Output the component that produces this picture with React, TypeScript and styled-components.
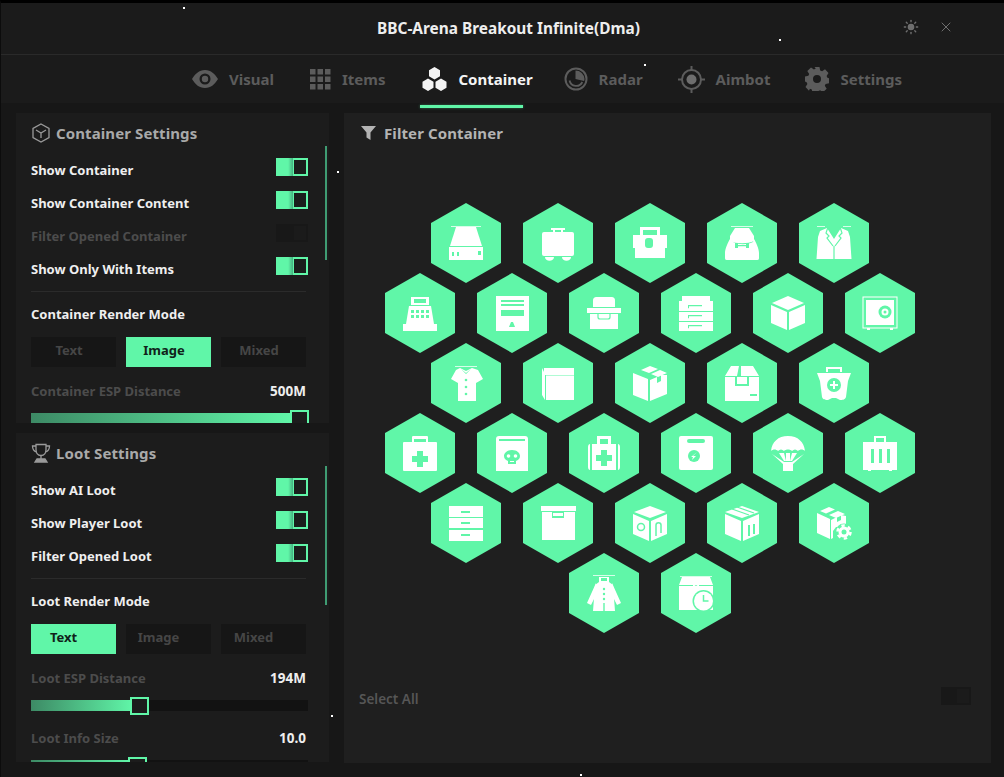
import React from 'react';
import styled, { createGlobalStyle } from 'styled-components';
import { Sun, X } from 'lucide-react';

const GREEN = '#60f6a8';

const GlobalStyle = createGlobalStyle`
  html, body { margin: 0; padding: 0; background: #000; }
  body { font-family: "Noto Sans", "Open Sans", sans-serif; }
  * { box-sizing: border-box; }
`;

const Window = styled.div`
  position: relative; width: 1004px; height: 777px; overflow: hidden;
  background: #171717; border-top: 3px solid #000; border-left: 1px solid #0c0c0c;
`;
const Header = styled.header`
  height: 52px; position: relative; display: flex; align-items: center; justify-content: center;
  background: #1b1b1b; border-bottom: 1px solid #2a2a2a; padding-left: 12px;
`;
const Title = styled.h1`
  margin: 0; font-size: 15.4px; font-weight: 700; color: #eee;
`;
const WindowButtons = styled.div`
  position: absolute; right: 50px; top: 16px; display: flex; gap: 19px; color: #6f6f6f;
`;
const Nav = styled.nav`
  height: 48px; display: flex; padding-left: 191px; background: #1b1b1b;
`;
const Tab = styled.div<{ $active?: boolean; $gap: number }>`
  position: relative; display: flex; align-items: center; gap: 11px; height: 48px;
  margin-right: ${p => p.$gap}px; font-size: 15px; font-weight: 700;
  color: ${p => (p.$active ? '#f4f4f4' : '#5c5c5c')};
  ${p => p.$active && `
    &::after {
      content: ''; position: absolute; left: -2px; right: 10px; bottom: -5px; height: 3px;
      background: ${GREEN}; box-shadow: 0 0 3px rgba(96,246,168,.4);
    }
  `}
`;
const Body = styled.main`
  display: flex; gap: 15px; padding: 10px 13px 0 15px; background: #171717; height: 674px;
`;
const Sidebar = styled.div`
  width: 313px; display: flex; flex-direction: column; gap: 10px;
`;
const Panel = styled.section<{ $height: number }>`
  position: relative; height: ${p => p.$height}px; overflow: hidden; background: #1c1c1c;
  padding: 9px 21px 0 15px;
`;
const PanelHead = styled.div`
  display: flex; align-items: center; gap: 5px; height: 22px; margin-bottom: 9px;
  font-size: 15px; font-weight: 700; color: #a9a9a9; letter-spacing: 0.1px;
`;
const Scroll = styled.div<{ $height: number }>`
  position: absolute; right: 2px; top: 33px; width: 2px; height: ${p => p.$height}px; background: #3f9c73;
`;
const Row = styled.div`
  height: 33px; display: flex; align-items: center; justify-content: space-between;
`;
const Label = styled.span<{ $dim?: boolean }>`
  font-size: 13px; font-weight: 700;
  color: ${p => (p.$dim ? '#4c4c4c' : '#efefef')};
`;
const Toggle = styled.span<{ $on?: boolean }>`
  display: flex; justify-content: flex-end; width: 32px; height: 18px; padding: 2px;
  margin-top: -5px;
  background: ${p => (p.$on ? `linear-gradient(90deg, ${GREEN} 38%, #48b684 52%, ${GREEN} 54%)` : '#181818')};
  &::after {
    content: ''; width: 12px; height: 14px;
    background: ${p => (p.$on ? '#1a1f1c' : '#1b1b1b')};
  }
`;
const Divider = styled.div`
  height: 1px; background: #2b2b2b; margin: 6px 2px 0 0;
`;
const SubTitle = styled.div`
  height: 43px; margin-bottom: 2px; display: flex; align-items: center; font-size: 13px; font-weight: 700;
  color: #efefef;
`;
const Modes = styled.div`
  display: grid; grid-template-columns: repeat(3, 85px); gap: 10px; margin-bottom: 13px;
`;
const ModeButton = styled.div<{ $active?: boolean; $inset: number }>`
  height: 30px; display: flex; align-items: center; justify-content: center;
  padding: 0 ${p => p.$inset}px 5px 0; font-size: 13px; font-weight: 700;
  background: ${p => (p.$active ? GREEN : '#161616')};
  color: ${p => (p.$active ? '#10221a' : '#464646')};
`;
const ValueRow = styled.div<{ $top?: number }>`
  height: 22px; margin-top: ${p => p.$top ?? 0}px;
  display: flex; align-items: center; justify-content: space-between; padding-right: 2px;
`;
const Value = styled.span`
  font-size: 13.5px; font-weight: 700; color: #eee;
`;
const Track = styled.div`
  position: relative; width: 277px; height: 11px; margin: 11px 0 0; background: #121212;
`;
const Fill = styled.div`
  height: 100%; background: linear-gradient(90deg, #3d8a65, ${GREEN});
`;
const Knob = styled.div`
  position: absolute; top: -3px; width: 19px; height: 18px; margin-left: -3px;
  border: 2px solid ${GREEN}; background: #1c1c1c;
`;
const MainPanel = styled.section`
  position: relative; flex: 1; height: 650px; background: #1f1f1f; padding: 9px 17px 0 17px;
`;
const FilterHead = styled(PanelHead)`
  margin: 0; color: #b3b3b3; gap: 8px;
`;
const HexGrid = styled.div`
  width: 530px; margin: 59px 0 0 24px; display: flex; flex-direction: column;
`;
const HexRow = styled.div`
  display: flex; justify-content: center; gap: 22px; margin-bottom: -10px;
`;
const Hex = styled.div`
  width: 70px; height: 80px; display: flex; align-items: center; justify-content: center;
  background: ${GREEN}; clip-path: polygon(50% 0, 100% 25%, 100% 75%, 50% 100%, 0 75%, 0 25%);
`;
const Footer = styled.div`
  position: absolute; left: 15px; right: 20px; top: 574px; height: 18px;
  display: flex; align-items: center; justify-content: space-between;
`;
const SelectAll = styled.span`
  padding-top: 6px; font-size: 13.5px; font-weight: 600; color: #565656;
`;
const OffSwitch = styled(Toggle)`
  margin: 0; width: 30px;
`;
const Speck = styled.i<{ $x: number; $y: number }>`
  position: absolute; left: ${p => p.$x}px; top: ${p => p.$y}px; width: 2px; height: 2px; background: #fff;
`;

const Glyph = ({ children }: { children: React.ReactNode }) => (
  <svg width="36" height="36" viewBox="0 0 36 36" fill="#fff">{children}</svg>
);
const cut = { fill: GREEN };
const cutLine = { fill: 'none', stroke: GREEN, strokeWidth: 1.2 };

const icons: React.ReactNode[][] = [
  [
    <><path d="M3 1h30v.8H3z" /><path d="M8 2h20l6 19H2z" /><path d="M1 22h34v13H1z" /><path d="M4 27h2v4H4zM9 27h2v4H9zM30 26h3v4h-3z" {...cut} /></>,
    <><path d="M11 3h14v2h-2v3h-2V5h-6v3h-2V5h-2z" /><rect x="2" y="7" width="32" height="24" rx="2" /><path d="M5 32h9c0 5-9 5-9 0zM22 32h9c0 5-9 5-9 0z" /></>,
    <><path d="M8 2h20v8h-3V5H11v5H8z" /><path d="M1 10h34v13h-2v10H3V23H1z" /><rect x="13" y="13" width="8" height="10" rx="3" {...cut} /></>,
    <><path d="M7 1h22v.8H7z" /><path d="M11 3h14l5 8v5c-6 3-18 3-24 0v-5z" /><path d="M6 14c-2 3-5 10-5 14v5c0 2 1 2 3 2h28c2 0 3 0 3-2v-5c0-4-3-11-5-14l-1 3c-6 3-14 3-20 0z" /><path d="M11 18h3v5h-3zM22 18h3v5h-3zM14 20h8v1.2h-8z" {...cut} /></>,
    <><path d="M1 1h8v.8H1zM27 1h8v.8h-8z" /><path d="M11 3L4 6l-2 6L.5 34h35L34 12l-2-6-7-3-7 11z" /><path d="M12 2l-2 6 3 3-2 2 6 8M24 2l2 6-3 3 2 2-6 8M18 21v13" {...cutLine} /></>,
  ],
  [
    <><path d="M9 2h18v8H9z" /><path d="M12 4h12v4H12z" {...cut} /><path d="M7 11h22l3 18H4z" /><path d="M9 15h3v3H9zM14 15h3v3h-3zM19 15h3v3h-3zM24 15h3v3h-3zM9 20h3v3H9zM14 20h3v3h-3zM19 20h3v3h-3zM24 20h3v3h-3z" {...cut} /><path d="M1 29h34v7H1z" /></>,
    <><path d="M2 1h33v35H2z" /><path d="M7 5h23v2H7zM7 9h23v2H7zM7 15h23v6H7z" {...cut} /><path d="M17 27l2 0 2 5h-6z" {...cut} /></>,
    <><path d="M7 6c0-3 1-4 4-4h14c3 0 4 1 4 4v6H7z" /><path d="M1 13h34v5H1z" /><path d="M4 19h28v15H4z" /><path d="M12 19v3c0 1 1 2 2 2h8c1 0 2-1 2-2v-3" {...cutLine} /></>,
    <><path d="M4 1h28v6H4z" /><path d="M1 6h34v10H1zM1 17h34v9H1zM1 27h34v9H1z" /><path d="M10 10h14v1.2H11v2h-1zM10 20h14v1.2H11v2h-1zM10 30h14v1.2H11v2h-1z" {...cut} /></>,
    <><path d="M18 1l16 7-16 7L2 8z" /><path d="M1 10l16 7v18L1 28zM35 10l-16 7v18l16-7z" /></>,
    <><rect x="1" y="2" width="34" height="31" fill="none" stroke="#fff" /><rect x="4" y="5" width="28" height="25" /><circle cx="23" cy="17" r="6.500" {...cut} /><circle cx="23" cy="17" r="3.500" /><circle cx="23" cy="17" r="1.500" {...cut} /><path d="M5 33h3v2H5zM28 33h3v2h-3z" /></>,
  ],
  [
    <><path d="M7 1h22v.8H7z" /><path d="M12 3l6 3 6-3 6 2 5 9-7 4v18H10V18l-7-4 5-9z" /><path d="M13 4l5 5 5-5-5 4z" {...cut} /><circle cx="18" cy="15" r="1.300" {...cut} /><circle cx="18" cy="22" r="1.300" {...cut} /><circle cx="18" cy="29" r="1.300" {...cut} /></>,
    <><path d="M4 3h30v7H4z" /><path d="M2 3l3 6v26l-3-5z" /><path d="M6 10.500h28V35H6z" /></>,
    <><path d="M18 1l8 3-9 4-8-3zM28 5l7 3-9 4-7-3z" /><path d="M1 8l15 6v22L1 30zM35 10v19l-17 7V15l7-3v6l4-2v-6z" /></>,
    <><path d="M7 1h8l-2 10H1zM17 1h12l6 10H17z" /><path d="M1 12h10v9h14v-9h10v24H1z" /><path d="M13 12h10v7H13z" /><path d="M26 29h7v2h-7z" {...cut} /></>,
    <><path d="M10 7V2h16v5h-2V4H12v3z" /><path d="M1 8h34l-3 8-2 16c-1 3-4 3-6 3l-4-2h-4l-4 2c-2 0-5 0-6-3L4 16z" /><circle cx="18" cy="20" r="7" {...cut} /><path d="M17 16h2v3h3v2h-3v3h-2v-3h-3v-2h3z" /></>,
  ],
  [
    <><path d="M10 7V2c0-1 1-1 1-1h14s1 0 1 1v5h-2V4H12v3z" /><rect x="1" y="7" width="34" height="29" rx="1" /><path d="M15 16h6v5h5v6h-5v5h-6v-5h-5v-6h5z" {...cut} /></>,
    <><path d="M2 4c0-2 1-3 3-3h26c2 0 3 1 3 3v32H2z" /><path d="M5 4h26v2H5z" {...cut} /><path d="M18 15c5 0 8 3 8 6 0 3-2 4-4 5v3h-8v-3c-2-1-4-2-4-5 0-3 3-6 8-6z" {...cut} /><circle cx="14.500" cy="21" r="1.800" /><circle cx="21.500" cy="21" r="1.800" /><path d="M16 26h4v1h-4z" /></>,
    <><path d="M11 9V1h14v8h-3V4H14v5z" /><path d="M2 12c0-2 1-3 2-3v26c-1 0-2-1-2-3zM6 9h24v26H6zM32 9c1 0 2 1 2 3v20c0 2-1 3-2 3z" /><path d="M15 15h6v5h5v6h-5v5h-6v-5h-5v-6h5z" {...cut} /></>,
    <><rect x="1" y="1" width="34" height="34" rx="2" /><rect x="9" y="4" width="18" height="4" rx="2" {...cut} /><circle cx="16" cy="21" r="6" {...cut} /><path d="M19 17l-4 4h3l-4 4 1-3h-2z" /></>,
    <><path d="M18 1C8 1 2 7 1 16c2-2 5-2 7 0 2-2 4-2 6 0 2-2 6-2 8 0 2-2 4-2 6 0 2-2 5-2 7 0C34 7 28 1 18 1z" /><path d="M2 19l11 10h10l11-10-12 8h-8z" /><path d="M9 18l5 8h2l-2-8zM27 18l-5 8h-2l2-8zM16 18h4v8h-4z" /><path d="M13 28h10v8H13z" /></>,
    <><path d="M12 7V1h12v6h-2V3H14v4z" /><path d="M1 7h34v28H1z" /><path d="M6 35h3v1H6zM27 35h3v1h-3z" /><path d="M9 14h3v14H9zM17 14h3v14h-3zM25 14h3v14h-3z" {...cut} /></>,
  ],
  [
    <><path d="M1 1h34v11H1zM1 13h34v10H1zM1 25h34v11H1z" /><path d="M13 6h9v2h-9zM13 17h9v2h-9zM13 29h9v2h-9z" {...cut} /></>,
    <><path d="M1 1h35v5H1z" /><path d="M2 7h33v28H2z" /><path d="M12 7h12v6H12z" {...cut} /><path d="M13 8h10v3H13z" /></>,
    <><path d="M18 1l16 6-16 6L2 7z" /><path d="M1 9l16 7v20L1 29zM35 9v20l-16 7V16z" /><circle cx="9" cy="22" r="3.500" fill="none" stroke={GREEN} strokeWidth="1.500" /><path d="M24 31V20c0-3 5-3 5 0v8" fill="none" stroke={GREEN} strokeWidth="1.500" /></>,
    <><path d="M18 1l17 6-17 6L1 7z" /><path d="M8 4l17 6M13 2l17 6" fill="none" stroke={GREEN} strokeWidth="1.200" /><path d="M1 9l16 7v20L1 29zM35 9v20l-16 7V16z" /><path d="M24 20h2v11h-2zM29 19h2v10h-2z" {...cut} /></>,
    <><path d="M13 2l6 2.500-9 4-6-2.500zM22 6l7 3-9 4-7-3z" /><path d="M1 8l13 6v20L1 28zM30 11v11H20l-3 4v7l-2 1V15l6-3v5l4-2v-5z" /><circle cx="28" cy="27" r="8.500" {...cut} /><circle cx="28" cy="27" r="5.500" /><circle cx="28" cy="27" r="6.500" fill="none" stroke="#fff" strokeWidth="2.500" strokeDasharray="3.400 3.400" /><circle cx="28" cy="27" r="2.500" {...cut} /></>,
  ],
  [
    <><path d="M7 0h22v.8H7z" /><path d="M13 2h10v5l4 3 2 26H7l2-26 4-3z" /><path d="M15 3h6v3h-6z" {...cut} /><path d="M10 8L1 28l4 2 6-12zM26 8l9 20-4 2-6-12z" /><path d="M17.300 28h1.400v8h-1.400z" {...cut} /><circle cx="18" cy="14" r="1.200" {...cut} /><circle cx="18" cy="19" r="1.200" {...cut} /><circle cx="18" cy="24" r="1.200" {...cut} /></>,
    <><path d="M2 1h32v.8H2z" /><path d="M4 2h11v8h6V2h11l3 8H1z" /><path d="M1 11h34v24H1z" /><path d="M15 2h6v10l-3-2-3 2z" /><circle cx="25.500" cy="26" r="11" {...cut} /><circle cx="25.500" cy="26" r="9.500" /><path d="M25.500 20v6h5" fill="none" stroke={GREEN} strokeWidth="1.500" /></>,
  ],
];

const EyeIcon = () => (
  <svg width="26" height="18" viewBox="0 0 26 18" fill="currentColor">
    <path fillRule="evenodd" d="M13 0c6 0 10 4 13 9-3 5-7 9-13 9S3 14 0 9c3-5 7-9 13-9zm0 3.500a5.500 5.500 0 1 0 0 11 5.500 5.500 0 0 0 0-11z" />
    <circle cx="13" cy="9" r="3.200" />
  </svg>
);
const GridIcon = () => (
  <svg width="21" height="21" viewBox="0 0 21 21" fill="currentColor">
    {[0, 7.5, 15].flatMap(x => [0, 7.5, 15].map(y => <rect key={`${x}-${y}`} x={x} y={y} width="5.500" height="5.500" />))}
  </svg>
);
const HexesIcon = () => (
  <svg width="25" height="24" viewBox="0 0 25 24" fill="currentColor">
    <path d="M12.500 0l5.500 3.200v6.100l-5.500 3.200L7 9.300V3.200zM6 11.500l5.500 3.200v6.100L6 24 .5 20.800v-6.100zM19 11.500l5.500 3.200v6.100L19 24l-5.500-3.200v-6.100z" />
  </svg>
);
const RadarIcon = () => (
  <svg width="24" height="24" viewBox="0 0 24 24" fill="none" stroke="currentColor">
    <circle cx="12" cy="12" r="10.500" strokeWidth="2" />
    <path d="M5.500 13.500a6.800 6.800 0 0 0 12.800 1.500" strokeWidth="1.800" />
    <path d="M11.500 3.500a9 9 0 0 1 9 8.500c0 1-.2 1.500-.5 2L11.500 12z" fill="currentColor" stroke="none" />
  </svg>
);
const AimIcon = () => (
  <svg width="27" height="27" viewBox="0 0 27 27" fill="none" stroke="currentColor" strokeWidth="2">
    <circle cx="13.500" cy="13.500" r="9.500" />
    <circle cx="13.500" cy="13.500" r="5" fill="#6e6e6e" stroke="none" />
    <path d="M13.500 0v5M13.500 22v5M0 13.500h5M22 13.500h5" />
  </svg>
);
const GearIcon = () => (
  <svg width="24" height="24" viewBox="0 0 24 24" fill="currentColor">
    <path fillRule="evenodd" d="M9.500 0h5l.7 3.400 1.900.8L20 2.300 23.500 6l-1.900 2.900.8 1.900 1.600.4v5l-3.400.7-.8 1.900 1.900 2.900-3.700 3.500-2.900-1.900-1.900.8-.7 1.800h-5l-.7-3.400-1.900-.8L4 23.700.5 20l1.900-2.900-.8-1.900L0 14.500v-5l3.400-.7.8-1.900L2.300 4 6 .5l2.900 1.900 1.900-.8zM12 8a4 4 0 1 0 0 8 4 4 0 0 0 0-8z" />
  </svg>
);
const BoxIcon = () => (
  <svg width="20" height="20" viewBox="0 0 20 20" fill="none" stroke="#9a9a9a" strokeWidth="1.300">
    <path d="M10 1l8 4.500v9L10 19l-8-4.500v-9z" />
    <path d="M5 7l5 3 5-3M10 10v5" />
  </svg>
);
const TrophyIcon = () => (
  <svg width="20" height="20" viewBox="0 0 20 20" fill="none" stroke="#9a9a9a" strokeWidth="1.300">
    <path d="M5 1.500h10v5c0 4-2 6-5 6s-5-2-5-6z" />
    <path d="M5 3H1.500c0 3 1 5 4 6M15 3h3.500c0 3-1 5-4 6M10 13v3" />
    <path d="M4 19l2-3h8l2 3z" fill="#9a9a9a" />
  </svg>
);
const FunnelIcon = () => (
  <svg width="15" height="14" viewBox="0 0 15 14" fill="#b3b3b3"><path d="M0 0h15L9.500 6.500V14l-4-2.500v-5z" /></svg>
);

const tabs = [
  { name: 'Visual', icon: <EyeIcon />, gap: 36 },
  { name: 'Items', icon: <GridIcon />, gap: 37 },
  { name: 'Container', icon: <HexesIcon />, gap: 31, active: true },
  { name: 'Radar', icon: <RadarIcon />, gap: 35 },
  { name: 'Aimbot', icon: <AimIcon />, gap: 35 },
  { name: 'Settings', icon: <GearIcon />, gap: 0 },
];
const specks = [[182, 4], [778, 36], [336, 168], [643, 61], [579, 771], [330, 712]];

const ModeGroup = ({ active, inset }: { active: string; inset: number }) => (
  <Modes>
    {['Text', 'Image', 'Mixed'].map(m => (
      <ModeButton key={m} $active={m === active} $inset={inset}>{m}</ModeButton>
    ))}
  </Modes>
);

const Slider = ({ pct }: { pct: number }) => (
  <Track>
    <Fill style={{ width: `${pct}%` }} />
    <Knob style={{ left: `${pct}%` }} />
  </Track>
);

const ToggleRow = ({ label, on = true }: { label: string; on?: boolean }) => (
  <Row>
    <Label $dim={!on}>{label}</Label>
    <Toggle $on={on} />
  </Row>
);

export default function App() {
  return (
    <Window>
      <GlobalStyle />
      <Header>
        <Title>BBC-Arena Breakout Infinite(Dma)</Title>
        <WindowButtons>
          <Sun size={16} fill="currentColor" />
          <X size={16} strokeWidth={1.5} />
        </WindowButtons>
      </Header>
      <Nav>
        {tabs.map(t => (
          <Tab key={t.name} $active={t.active} $gap={t.gap}>{t.icon}{t.name}</Tab>
        ))}
      </Nav>
      <Body>
        <Sidebar>
          <Panel $height={310}>
            <PanelHead><BoxIcon />Container Settings</PanelHead>
            <Scroll $height={114} />
            <ToggleRow label="Show Container" />
            <ToggleRow label="Show Container Content" />
            <ToggleRow label="Filter Opened Container" on={false} />
            <ToggleRow label="Show Only With Items" />
            <Divider />
            <SubTitle>Container Render Mode</SubTitle>
            <ModeGroup active="Image" inset={9} />
            <ValueRow><Label $dim>Container ESP Distance</Label><Value>500M</Value></ValueRow>
            <Slider pct={94.500} />
          </Panel>
          <Panel $height={329}>
            <PanelHead><TrophyIcon />Loot Settings</PanelHead>
            <Scroll $height={139} />
            <ToggleRow label="Show AI Loot" />
            <ToggleRow label="Show Player Loot" />
            <ToggleRow label="Filter Opened Loot" />
            <Divider />
            <SubTitle>Loot Render Mode</SubTitle>
            <ModeGroup active="Text" inset={20} />
            <ValueRow><Label $dim>Loot ESP Distance</Label><Value>194M</Value></ValueRow>
            <Slider pct={37} />
            <ValueRow $top={16}><Label $dim>Loot Info Size</Label><Value>10.0</Value></ValueRow>
            <Slider pct={36} />
          </Panel>
        </Sidebar>
        <MainPanel>
          <FilterHead><FunnelIcon />Filter Container</FilterHead>
          <HexGrid>
            {icons.map((row, r) => (
              <HexRow key={r}>
                {row.map((icon, i) => (
                  <Hex key={i}><Glyph>{icon}</Glyph></Hex>
                ))}
              </HexRow>
            ))}
          </HexGrid>
          <Footer>
            <SelectAll>Select All</SelectAll>
            <OffSwitch />
          </Footer>
        </MainPanel>
      </Body>
      {specks.map(([x, y]) => <Speck key={`${x}-${y}`} $x={x} $y={y} />)}
    </Window>
  );
}
